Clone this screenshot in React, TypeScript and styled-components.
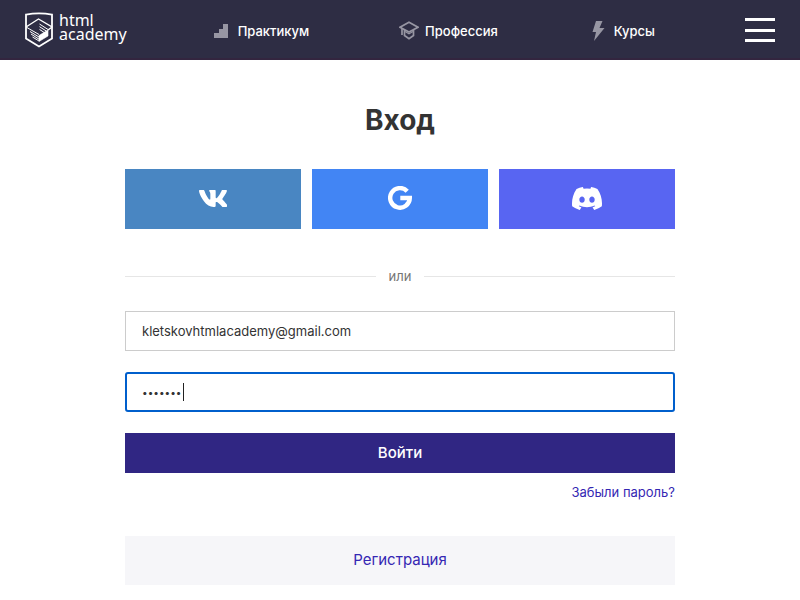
import React, { useState } from "react";
import styled, { createGlobalStyle } from "styled-components";

const GlobalStyle = createGlobalStyle`
  *, *::before, *::after { box-sizing: border-box; }
  body {
    margin: 0;
    background: #ffffff;
    color: #333333;
    font-family: Inter, "Open Sans", sans-serif;
    font-size: 14px;
    line-height: 20px;
  }
`;

const Header = styled.header`
  display: flex;
  align-items: center;
  height: 60px;
  padding: 2px 25px 0;
  background: #2e2d44;
  border-bottom: 2px solid #33253f;
`;

const Logo = styled.a`
  display: flex;
  align-items: center;
  gap: 6px;
  color: #ffffff;
  font-family: "Noto Sans", "Open Sans", sans-serif;
  font-size: 16px;
  line-height: 14px;
  text-decoration: none;
`;

const LogoText = styled.span`
  display: flex;
  flex-direction: column;
  padding-bottom: 6px;
`;

const Nav = styled.nav`
  display: flex;
  flex: 1;
  justify-content: space-between;
  padding: 2px 90px 0 85px;
`;

const NavLink = styled.a`
  display: flex;
  align-items: center;
  gap: 6px;
  color: #ffffff;
  font-size: 13px;
  font-weight: 500;
  text-decoration: none;
`;

const NavIcon = styled.svg`
  width: 20px;
  height: 20px;
  color: #9796a3;
`;

const MenuButton = styled.button`
  display: flex;
  flex-direction: column;
  justify-content: space-between;
  width: 30px;
  height: 24px;
  padding: 0;
  border: 0;
  background: none;
  cursor: pointer;
`;

const MenuBar = styled.span`
  height: 3px;
  background: #ffffff;
`;

const Main = styled.main`
  width: 100%;
  max-width: 600px;
  margin: 0 auto;
  padding: 40px 25px 15px;
`;

const Title = styled.h1`
  margin: 0 0 29px;
  color: #333333;
  font-size: 28px;
  font-weight: 700;
  line-height: 40px;
  text-align: center;
`;

const SocialRow = styled.div`
  display: grid;
  grid-template-columns: repeat(3, 1fr);
  gap: 11px;
`;

const SocialButton = styled.button<{ $color: string }>`
  display: flex;
  align-items: center;
  justify-content: center;
  height: 60px;
  padding: 0 0 2px;
  border: 0;
  background: ${({ $color }) => $color};
  color: #ffffff;
  cursor: pointer;
`;

const Divider = styled.div`
  display: flex;
  align-items: center;
  gap: 13px;
  margin: 37px 0 25px;
  color: #757575;
  font-size: 13px;

  &::before,
  &::after {
    content: "";
    flex: 1;
    height: 1px;
    background: #e6e6e6;
  }
`;

const Form = styled.form`
  display: flex;
  flex-direction: column;
  gap: 21px;
`;

const Field = styled.div`
  position: relative;
`;

const Input = styled.input`
  display: block;
  width: 100%;
  height: 40px;
  padding: 0 16px;
  border: 1px solid #cccccc;
  border-radius: 0;
  outline: none;
  background: #ffffff;
  color: #333333;
  font-family: inherit;
  font-size: 13px;
`;

const PasswordInput = styled(Input)`
  padding: 0 15px;
  border: 2px solid #005fcc;
  border-radius: 3px;
  caret-color: transparent;
  font-size: 10px;
`;

const Caret = styled.span`
  position: absolute;
  top: 11px;
  left: 58px;
  width: 1px;
  height: 18px;
  background: #222222;
`;

const SubmitButton = styled.button`
  height: 40px;
  padding: 0 0 2px;
  border: 0;
  background: #302683;
  color: #ffffff;
  font-family: inherit;
  font-size: 15px;
  font-weight: 500;
  cursor: pointer;
`;

const ForgotRow = styled.div`
  display: flex;
  justify-content: flex-end;
  margin: 9px 0 34px;
`;

const ForgotLink = styled.a`
  color: #3527b3;
  font-size: 13px;
  text-decoration: none;
`;

const RegisterLink = styled.a`
  display: flex;
  align-items: center;
  justify-content: center;
  height: 49px;
  padding-bottom: 2px;
  background: #f6f6f9;
  color: #3527b3;
  font-size: 15px;
  text-decoration: none;
`;

function ShieldLogo() {
  return (
    <svg width="28" height="36" viewBox="0 0 28 36" fill="none" stroke="#fff" aria-hidden="true">
      <path d="M1 2.600Q14 .2 27 2.600V26.500L14 34.500 1 26.500Z" strokeWidth="1.800" />
      <path d="M1 15 13.500 7 27 15 23 18" strokeWidth="1.400" />
      <path d="M1 15 14 22.500M5 19.500 14 25M6 22 14 27.200M7.500 25 14 29" strokeWidth="1" />
      <path d="M14.500 12 23 17.500M14.500 14.700 22 19.500M14.500 17.400 20 21" strokeWidth="1" />
      <path d="M14 23.500 23 18V24L14 29.500Z" fill="#fff" strokeWidth=".6" />
    </svg>
  );
}

function StairsIcon() {
  return (
    <NavIcon viewBox="0 0 20 20" aria-hidden="true">
      <path d="M2 17V12H7V8H11V3H16V17Z" fill="currentColor" />
    </NavIcon>
  );
}

function CapIcon() {
  return (
    <NavIcon viewBox="0 0 20 20" fill="none" stroke="currentColor" strokeWidth="1.700" aria-hidden="true">
      <path d="M10 1.200 19 6.200 10 11 1 6.200Z" />
      <path d="M5.500 9V14.500L10 17.700 14.500 14.500V9M3 7.500V14" />
      <path d="M6 10.500 10 12.700 14 10.500" strokeWidth="1.200" />
    </NavIcon>
  );
}

function BoltIcon() {
  return (
    <NavIcon viewBox="0 0 20 20" aria-hidden="true">
      <path d="M8 0H14.500L11.500 7H16.500L6 20 8 11H4.500Z" fill="currentColor" />
    </NavIcon>
  );
}

function VkIcon() {
  return (
    <svg width="28" height="17" viewBox="18 96 530 320" fill="currentColor" aria-hidden="true">
      <path d="M545 117.7c3.7-12.5 0-21.7-17.8-21.7h-58.9c-15 0-21.9 7.9-25.6 16.7 0 0-30 73.1-72.4 120.5-13.7 13.7-20 18.1-27.5 18.1-3.7 0-9.4-4.4-9.4-16.9V117.7c0-15-4.2-21.7-16.6-21.7h-92.6c-9.4 0-15 7-15 13.5 0 14.2 21.2 17.5 23.4 57.5v86.8c0 19-3.4 22.5-10.9 22.5-20 0-68.6-73.4-97.4-157.4-5.8-16.3-11.500-22.900-26.600-22.900H38.800c-16.800 0-20.200 7.900-20.200 16.700 0 15.600 20 93.100 93.100 195.500C160.400 378.100 229 416 291.400 416c37.500 0 42.100-8.400 42.100-22.900 0-66.800-3.400-73.100 15.400-73.100 8.700 0 23.700 4.400 58.700 38.100 40 40 46.600 57.900 69 57.900h58.900c16.800 0 25.300-8.400 20.400-25-11.200-34.900-86.900-106.700-90.300-111.500-8.700-11.200-6.200-16.200 0-26.200.1-.1 72-101.300 79.400-135.600z" />
    </svg>
  );
}

function GoogleIcon() {
  return (
    <svg width="24" height="24" viewBox="0 0 24 24" fill="none" stroke="currentColor" strokeWidth="4.400" aria-hidden="true">
      <path d="M19.200 5.200A9.800 9.800 0 1 0 21.800 12H12.300" />
    </svg>
  );
}

function DiscordIcon() {
  return (
    <svg width="30" height="23" viewBox="0 2.800 24 18.400" fill="currentColor" aria-hidden="true">
      <path d="M20.317 4.370a19.791 19.791 0 0 0-4.885-1.515.074.074 0 0 0-.079.037c-.21.375-.444.864-.608 1.250a18.270 18.270 0 0 0-5.487 0 12.640 12.640 0 0 0-.617-1.250.077.077 0 0 0-.079-.037A19.736 19.736 0 0 0 3.677 4.370a.07.07 0 0 0-.032.027C.533 9.046-.32 13.580.099 18.057a.082.082 0 0 0 .031.057 19.900 19.900 0 0 0 5.993 3.030.078.078 0 0 0 .084-.028 14.090 14.090 0 0 0 1.226-1.994.076.076 0 0 0-.041-.106 13.107 13.107 0 0 1-1.872-.892.077.077 0 0 1-.008-.128l.372-.292a.074.074 0 0 1 .077-.01c3.928 1.793 8.180 1.793 12.062 0a.074.074 0 0 1 .078.009l.373.293a.077.077 0 0 1-.006.127 12.299 12.299 0 0 1-1.873.892.077.077 0 0 0-.041.107c.36.698.772 1.362 1.225 1.993a.076.076 0 0 0 .084.028 19.839 19.839 0 0 0 6.002-3.030.077.077 0 0 0 .032-.054c.5-5.177-.838-9.674-3.549-13.660a.061.061 0 0 0-.031-.03ZM8.020 15.330c-1.183 0-2.157-1.085-2.157-2.419s.955-2.419 2.157-2.419c1.210 0 2.176 1.096 2.157 2.419 0 1.334-.956 2.419-2.157 2.419Zm7.975 0c-1.183 0-2.157-1.085-2.157-2.419s.955-2.419 2.157-2.419c1.210 0 2.176 1.096 2.157 2.419 0 1.334-.946 2.419-2.157 2.419Z" />
    </svg>
  );
}

export default function App() {
  const [email, setEmail] = useState("kletskovhtmlacademy@gmail.com");
  const [password, setPassword] = useState("academy");

  return (
    <>
      <GlobalStyle />
      <Header>
        <Logo href="#">
          <ShieldLogo />
          <LogoText>
            <span>html</span>
            <span>academy</span>
          </LogoText>
        </Logo>
        <Nav>
          <NavLink href="#"><StairsIcon />Практикум</NavLink>
          <NavLink href="#"><CapIcon />Профессия</NavLink>
          <NavLink href="#"><BoltIcon />Курсы</NavLink>
        </Nav>
        <MenuButton type="button" aria-label="Меню">
          <MenuBar />
          <MenuBar />
          <MenuBar />
        </MenuButton>
      </Header>
      <Main>
        <Title>Вход</Title>
        <SocialRow>
          <SocialButton type="button" $color="#4986c2" aria-label="ВКонтакте"><VkIcon /></SocialButton>
          <SocialButton type="button" $color="#4285f4" aria-label="Google"><GoogleIcon /></SocialButton>
          <SocialButton type="button" $color="#5865f2" aria-label="Discord"><DiscordIcon /></SocialButton>
        </SocialRow>
        <Divider>или</Divider>
        <Form onSubmit={(event) => event.preventDefault()}>
          <Field>
            <Input
              type="email"
              aria-label="Электронная почта"
              value={email}
              onChange={(event) => setEmail(event.target.value)}
            />
          </Field>
          <Field>
            <PasswordInput
              type="password"
              aria-label="Пароль"
              value={password}
              onChange={(event) => setPassword(event.target.value)}
            />
            <Caret />
          </Field>
          <SubmitButton type="submit">Войти</SubmitButton>
        </Form>
        <ForgotRow>
          <ForgotLink href="#">Забыли пароль?</ForgotLink>
        </ForgotRow>
        <RegisterLink href="#">Регистрация</RegisterLink>
      </Main>
    </>
  );
}
